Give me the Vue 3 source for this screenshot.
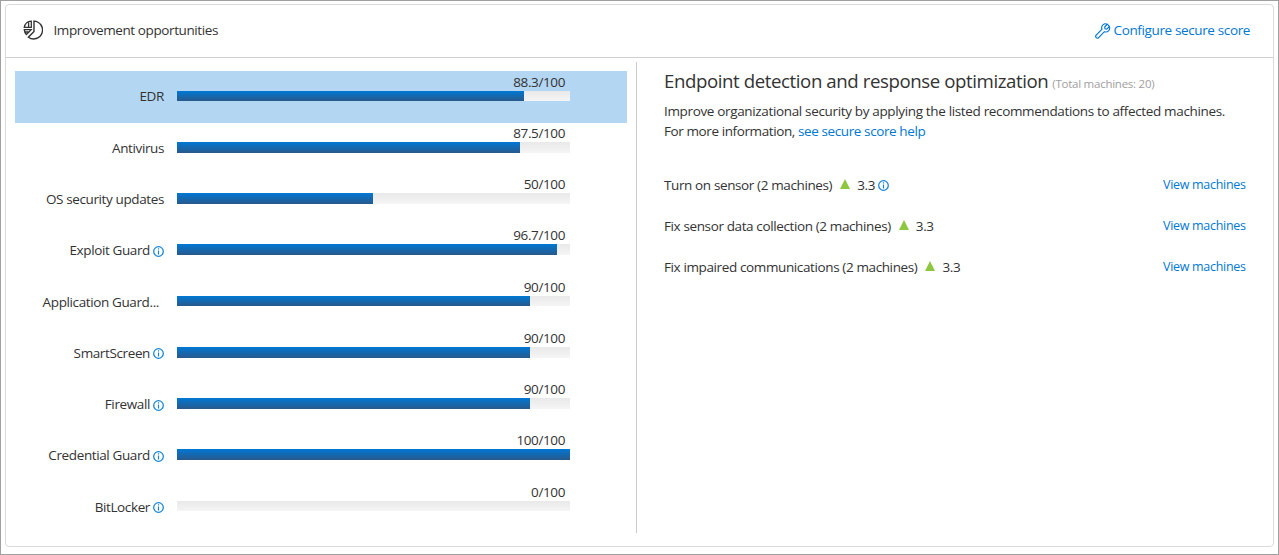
<script setup>
const TRACK = 393
const rows = [
  { name: 'EDR', score: 88.3, selected: true },
  { name: 'Antivirus', score: 87.5 },
  { name: 'OS security updates', score: 50 },
  { name: 'Exploit Guard', score: 96.7, info: true },
  { name: 'Application Guard...', score: 90, cut: true },
  { name: 'SmartScreen', score: 90, info: true },
  { name: 'Firewall', score: 90, info: true },
  { name: 'Credential Guard', score: 100, info: true },
  { name: 'BitLocker', score: 0, info: true },
]
const actions = [
  { text: 'Turn on sensor (2 machines)', gain: '3.3', info: true },
  { text: 'Fix sensor data collection (2 machines)', gain: '3.3' },
  { text: 'Fix impaired communications (2 machines)', gain: '3.3' },
]
const fillWidth = (score) => Math.floor((TRACK * score) / 100) + 'px'
</script>

<template>
  <div class="page">
    <section class="card">
      <header class="head">
        <svg class="pie" width="20" height="20" viewBox="0 0 20 20" fill="none" stroke="#333" stroke-width="1.4">
          <path d="M11 1.1A8.9 8.9 0 1 1 5.4 17.2L11 11.4z" />
          <path d="M8.3 1.1A7.6 7.6 0 0 0 1.3 7.4H8.3zM5.6 2.6V7.4" stroke-width="1.3" />
          <path d="M.6 9.6H8.2L3.4 14.6A8 8 0 0 1 1.3 9.6zM1.9 12H5.6" stroke-width="1.3" />
        </svg>
        <h1 class="title">Improvement opportunities</h1>
        <a class="configure">
          <svg width="16" height="16" viewBox="0 0 16 16" fill="none" stroke="#0078d4" stroke-width="1.15">
            <path d="M12.3 1.2A3.9 3.9 0 0 0 7 6.2L1.2 12.2A1.7 1.7 0 0 0 3.7 14.6L9.4 8.7A3.9 3.9 0 0 0 14.4 3.6L11.8 6.1 10 5.8 9.7 4z" />
            <path d="M12.3 1.2L14.4 3.6M2.6 13.2h.3" />
          </svg>
          <span>Configure secure score</span>
        </a>
      </header>
      <div class="body">
        <ul class="scores">
          <li v-for="r in rows" :key="r.name" class="row" :class="{ selected: r.selected }">
            <div class="label" :class="{ cut: r.cut }">
              <span>{{ r.name }}</span>
              <svg v-if="r.info" class="info" width="11" height="11" viewBox="0 0 11 11" fill="none" stroke="#1683d8">
                <circle cx="5.5" cy="5.5" r="4.8" stroke-width="1.25" />
                <path d="M5.5 2.3v1.2M5.5 4.5v4" stroke-width="1.2" />
              </svg>
            </div>
            <div class="meter">
              <div class="value">{{ r.score }}/100</div>
              <div class="track"><div class="fill" :style="{ width: fillWidth(r.score) }"></div></div>
            </div>
          </li>
        </ul>
        <section class="detail">
          <h2 class="heading"><span>Endpoint detection and response optimization</span><span class="total">(Total machines: 20)</span></h2>
          <p class="desc"><span class="lead">Improve organizational security by applying the listed recommendations to affected machines.</span><br />For more information, <a class="help">see secure score help</a></p>
          <div v-for="a in actions" :key="a.text" class="action">
            <span>{{ a.text }}</span>
            <svg class="up" width="10" height="10" viewBox="0 0 10 10"><path d="M5 0L10 10H0z" fill="#8dc63f" /></svg>
            <span>{{ a.gain }}</span>
            <svg v-if="a.info" class="info" width="11" height="11" viewBox="0 0 11 11" fill="none" stroke="#1683d8">
              <circle cx="5.5" cy="5.5" r="4.8" stroke-width="1.25" />
              <path d="M5.5 2.3v1.2M5.5 4.5v4" stroke-width="1.2" />
            </svg>
            <a class="view">View machines</a>
          </div>
        </section>
      </div>
    </section>
  </div>
</template>

<style>
body { margin: 0; background: #fff; overflow: hidden; }
</style>

<style scoped>
* { box-sizing: border-box; }
.page {
  width: 1279px; height: 555px; padding: 3px 4px 7px 4px;
  border: 1px solid #a0a0a0; background: #fff; color: #333;
  font: 13.5px/18px "Open Sans", "Noto Sans", sans-serif; letter-spacing: -.38px;
}
.card { width: 1269px; height: 543px; border: 1px solid #dadada; border-radius: 4px; }
.head { display: flex; align-items: center; height: 53px; padding: 0 23px 3px 17px; border-bottom: 1px solid #d0d0d0; }
.pie { margin-top: 1px; }
.title { margin: 0 0 0 10.5px; font-size: 13.5px; font-weight: 400; letter-spacing: -.4px; white-space: nowrap; }
.configure { display: flex; align-items: center; gap: 3px; margin-left: auto; color: #0078d4; white-space: nowrap; }
.configure svg { margin-top: 2px; }
.configure span { letter-spacing: -.37px; }
.body { display: flex; }
.scores { list-style: none; margin: 13px 0 0 9px; padding: 0; width: 612px; }
.row { display: flex; height: 51.25px; }
.row.selected { background: #b3d6f2; height: 52px; margin-bottom: -.75px; }
.label { display: flex; justify-content: flex-end; align-items: center; gap: 3px; width: 149px; height: 51.3px; white-space: nowrap; }
.selected .label { height: 50px; }
.label.cut { padding-right: 5px; }
.info { flex: none; margin-top: 2px; }
.meter { width: 393px; margin-left: 13px; padding-top: 1.7px; }
.value { height: 18px; padding-right: 5px; text-align: right; }
.track { height: 10.67px; background: linear-gradient(#e9e9e9, #f5f5f5); }
.fill { height: 100%; background: linear-gradient(#0078d4, #29598c); }
.detail { width: 610px; height: 471px; margin: 4px 0 0 9px; padding: 7px 0 0 27px; border-left: 1px solid #ccc; }
.heading { display: flex; align-items: baseline; gap: 4px; margin: 0; font-size: 18.67px; line-height: 24px; font-weight: 400; letter-spacing: -.42px; white-space: nowrap; }
.total { font-size: 11.5px; letter-spacing: -.25px; color: #a0a0a0; }
.desc { margin: 5px 0 23px; line-height: 20px; letter-spacing: -.4px; white-space: nowrap; }
.lead { letter-spacing: -.345px; }
.help { color: #0078d4; }
.action { display: flex; align-items: center; height: 41px; white-space: nowrap; }
.up { margin: -2px 7px 0 8px; }
.action .info { margin-left: 3px; }
.view { margin: 1px 0 0 auto; width: 83px; color: #0078d4; font-size: 12.5px; letter-spacing: -.3px; }
</style>
